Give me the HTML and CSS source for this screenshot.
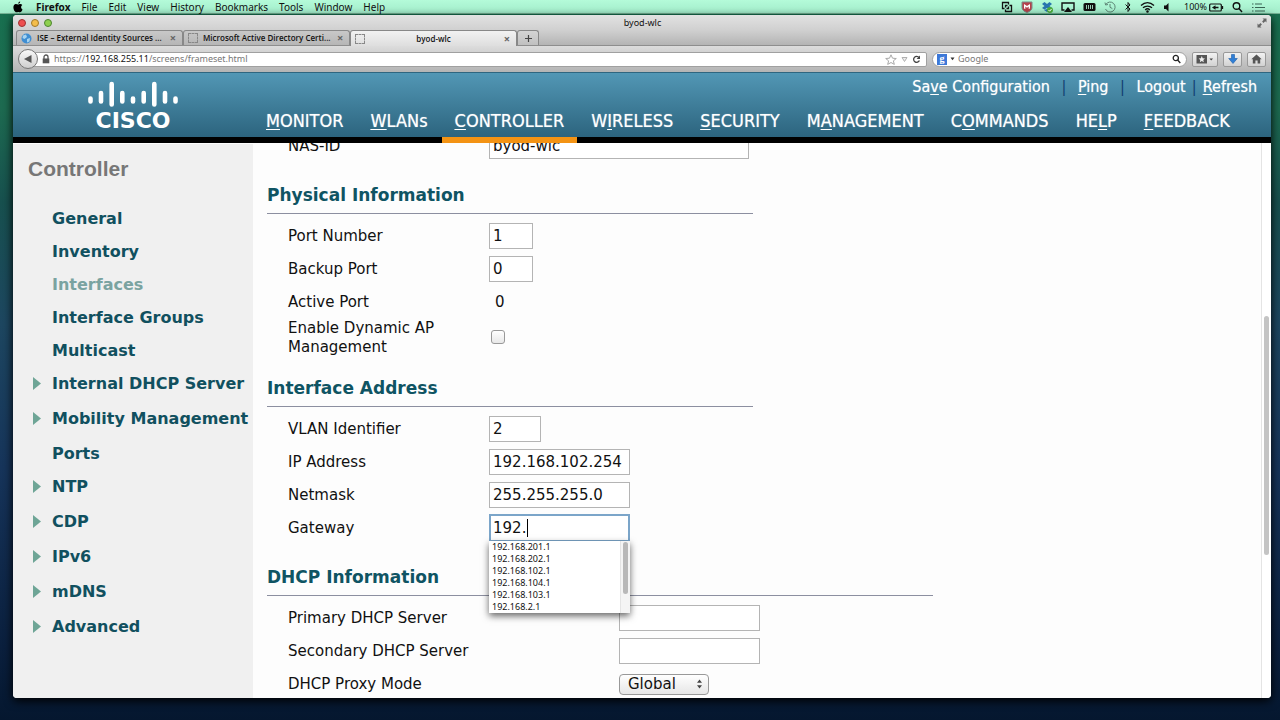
FILE: index.html
```html
<!DOCTYPE html>
<html lang="en">
<head>
<meta charset="utf-8">
<title>byod-wlc</title>
<link rel="stylesheet" href="styles.css">
</head>

<body>
<div class="menubar">
  <svg class="apple" width="12" height="12" viewBox="0 0 12 12"><path d="M8.2 0.4C7 0.6 6.2 1.5 6.2 2.7 7.400 2.600 8.200 1.600 8.200 0.400zM8.300 2.900C7.300 2.900 6.800 3.400 6.100 3.400 5.400 3.400 4.700 2.900 3.900 2.900 2.400 3 1.400 4.300 1.400 6.300 1.400 8.800 3 11.300 4.300 11.300 5 11.300 5.400 10.900 6.200 10.900 7 10.900 7.300 11.300 8 11.300 9.200 11.300 10.300 9.300 10.500 8.500 8.700 7.700 8.600 5 10.300 4.100 9.800 3.300 9.100 2.900 8.300 2.900z"/></svg>
  <ul class="menus">
    <li class="app">Firefox</li>
    <li>File</li>
    <li>Edit</li>
    <li>View</li>
    <li>History</li>
    <li>Bookmarks</li>
    <li>Tools</li>
    <li>Window</li>
    <li>Help</li>
  </ul>
  <div class="status">
    <svg width="12" height="12" viewBox="0 0 12 12" fill="none" stroke="#111" stroke-width="1.3"><path d="M3.500 7.500H1.500V1.500H7.500V3.500M8.500 4.500H10.500V10.500H4.500V8.500M4.500 6.500V4.500H6.500M7.500 5.500V7.500H5.500"/></svg>
    <svg width="12" height="12" viewBox="0 0 12 12"><path d="M1 1H11V7C11 9 8 11 6 11.500 4 11 1 9 1 7z" fill="#b5404a" stroke="#7c8c88"/><path d="M3 3L6 5 9 3V7.500L7.700 8V5.500L6 6.800 4.300 5.500V8L3 7.500z" fill="#fff"/></svg>
    <svg width="12" height="12" viewBox="0 0 12 12"><path d="M3.500 1L6 3 8.500 1 11 3 8.500 5 11 7 8.500 8.500 6 7 3.500 8.500 1 7 3.500 5 1 3zM3 9L6 8 9 9 6 11z" fill="#2874ae"/><circle cx="9" cy="9" r="3" fill="#4cae3c"/><path d="M7.500 9L8.700 10.200 10.500 8" fill="none" stroke="#fff"/></svg>
    <svg width="14" height="12" viewBox="0 0 14 12"><path d="M3.500 9H1V2H13V9H10.500" fill="none" stroke="#111" stroke-width="1.400"/><path d="M7 6L11 11H3z" fill="#111"/></svg>
    <svg width="13" height="12" viewBox="0 0 13 12"><rect x="0.500" y="2" width="12" height="8" rx="1.500" fill="#111"/><path d="M3.500 4V8M5.500 4V8M7.500 4V8M9.500 4V8" stroke="#a9e3c8" stroke-width="0.900"/></svg>
    <svg width="12" height="12" viewBox="0 0 12 12" fill="none" stroke="#5c8474"><path d="M1.800 3.500A5 5 0 1 1 1.500 8M1 1.500L1.600 4 4 3.500M6 3V6.300L8.300 7.500"/></svg>
    <svg width="8" height="12" viewBox="0 0 8 12" fill="none" stroke="#111"><path d="M1.500 3.500L6 8 4 10.500V1.500L6 4 1.500 8.500"/></svg>
    <svg width="15" height="12" viewBox="0 0 15 12" fill="none" stroke="#111" stroke-width="1.400"><path d="M1 4.500C5 0.900 10 0.900 14 4.500M3 6.800C5.500 4.500 9.500 4.500 12 6.800M5.200 8.900C6.500 7.700 8.500 7.700 9.800 8.900"/><circle cx="7.500" cy="10.500" r="0.600"/></svg>
    <svg width="7" height="12" viewBox="0 0 7 12"><path d="M1 4.500H3L5.500 2V10.500L3 8H1z" fill="#111"/></svg>
    <span class="battery">100%
      <svg width="15" height="12" viewBox="0 0 15 12"><rect x="0.700" y="3" width="11.600" height="7" rx="1" fill="none" stroke="#111" stroke-width="1.200"/><path d="M13.500 5V8M6 6.500H9.500" stroke="#111" stroke-width="1.300"/><path d="M3 6.500L6.500 4.300V8.700z" fill="#111"/></svg>
    </span>
    <svg width="11" height="12" viewBox="0 0 11 12" fill="none" stroke="#111" stroke-width="1.400"><circle cx="4.500" cy="5" r="3.300"/><path d="M7 7.500L10 11"/></svg>
    <svg width="15" height="12" viewBox="0 0 15 12" fill="none" stroke="#3a6454" stroke-width="1.200"><path d="M1 3H2.500M4 3H11M1 6.500H2.500M4 6.500H14M1 10H2.500M4 10H14"/></svg>
  </div>
</div>

<div class="window">
  <div class="titlebar">
    <div class="lights"><i class="red"></i><i class="yellow"></i><i class="green"></i></div>
    <span class="title">byod-wlc</span>
    <svg class="full" width="10" height="10" viewBox="0 0 10 10" fill="#666"><path d="M5.500 0.500H9.500V4.500L8.200 3.200 6.500 4.900 5.100 3.500 6.800 1.800zM4.500 9.500H0.500V5.500L1.800 6.800 3.500 5.100 4.900 6.500 3.200 8.200z"/></svg>
  </div>
  <div class="tabs">
    <div class="tab">
      <svg width="11" height="11" viewBox="0 0 11 11"><circle cx="5.500" cy="5.500" r="5" fill="#3f8ed2"/><path d="M2 2.500L5 1.500 6 4 3.500 6 1.500 5zM6 6L9 5 8.500 8.500 6 9.500z" fill="#a8d4f0"/></svg>
      <span>ISE – External Identity Sources ...</span>
      <button type="button" aria-label="Close tab">×</button>
    </div>
    <div class="tab">
      <i class="blank"></i>
      <span>Microsoft Active Directory Certi...</span>
      <button type="button" aria-label="Close tab">×</button>
    </div>
    <div class="tab on">
      <i class="blank"></i>
      <span>byod-wlc</span>
      <button type="button" aria-label="Close tab">×</button>
    </div>
    <button class="newtab" type="button" aria-label="New tab"><svg width="9" height="9" viewBox="0 0 9 9"><path d="M4.500 1V8M1 4.500H8" stroke="#444" stroke-width="1.200"/></svg></button>
  </div>
  <div class="toolbar">
    <button class="back" type="button" aria-label="Back"><svg width="10" height="10" viewBox="0 0 10 10"><path d="M8.500 1V9L1 5z" fill="#555"/></svg></button>
    <div class="urlbar">
      <svg width="8" height="10" viewBox="0 0 8 10"><path d="M2 5V3A2 2 0 0 1 6 3V5" fill="none" stroke="#555" stroke-width="1.300"/><rect x="0.700" y="4.500" width="6.600" height="4.800" fill="#555"/></svg>
      <span class="url">https://<b>192.168.255.11</b>/screens/frameset.html</span>
      <svg width="12" height="11" viewBox="0 0 12 11"><path d="M6 0.800L7.500 4.200 11.300 4.500 8.400 6.800 9.300 10.400 6 8.500 2.700 10.400 3.600 6.800 0.700 4.500 4.500 4.200z" fill="#fff" stroke="#a8a8a8"/></svg>
      <svg width="7" height="7" viewBox="0 0 7 7"><path d="M1 1.500H6L3.500 5.500z" fill="#eee" stroke="#b0b0b0"/></svg>
      <svg width="9" height="9" viewBox="0 0 9 9"><path d="M7 2.500A3 3 0 1 0 7.400 5.500" fill="none" stroke="#444" stroke-width="1.300"/><path d="M8 0.500V4H4.600z" fill="#444"/></svg>
    </div>
    <div class="search">
      <span class="g">g</span>
      <svg width="5" height="4" viewBox="0 0 5 4"><path d="M0.500 0.500H4.500L2.500 3.200z" fill="#333"/></svg>
      <input type="text" placeholder="Google" aria-label="Search">
      <svg width="9" height="10" viewBox="0 0 9 10" fill="none" stroke="#222" stroke-width="1.300"><circle cx="3.800" cy="4" r="2.600"/><path d="M5.600 6L8.300 9"/></svg>
    </div>
    <button class="tool wide" type="button" aria-label="Bookmarks"><svg width="18" height="10" viewBox="0 0 18 10"><rect x="0.500" y="1" width="10.500" height="8.500" fill="#555"/><path d="M5.800 2L6.700 4.200 9 4.400 7.300 5.900 7.800 8.200 5.800 7 3.800 8.200 4.300 5.900 2.600 4.400 4.900 4.200z" fill="#eee"/><path d="M13.500 4.500H17L15.200 6.500z" fill="#444"/></svg></button>
    <button class="tool" type="button" aria-label="Downloads"><svg width="10" height="10" viewBox="0 0 10 10"><path d="M3.500 0.500H6.500V4.500H9.300L5 9.500 0.700 4.500H3.500z" fill="#2f7fd6" stroke="#1b5ca8" stroke-width="0.600"/></svg></button>
    <button class="tool" type="button" aria-label="Home"><svg width="11" height="10" viewBox="0 0 11 10"><path d="M5.500 0.500L10.700 5.300H9.200V9.500H6.600V6.500H4.400V9.500H1.800V5.300H0.300z" fill="#555"/></svg></button>
  </div>

  <div class="header">
    <div class="logo">
      <svg width="92" height="28" viewBox="0 0 92 28" stroke="#fff" stroke-width="4.600" stroke-linecap="round"><path d="M3.500 18.500V21.500M14 13V21.500M24.700 4V24.500M35.300 13V21.500M46 18.500V21.500M56.700 13V21.500M67.300 4V24.500M78 13V21.500M88.500 18.500V21.500"/></svg>
      <span>CISCO</span>
    </div>
    <div class="links">
      <a href="#">Sa<u>v</u>e Configuration</a><i>|</i><a href="#"><u>P</u>ing</a><i>|</i><a href="#">Logout</a><i class="tight">|</i><a href="#"><u>R</u>efresh</a>
    </div>
    <div class="nav">
      <a href="#"><u>M</u>ONITOR</a>
      <a href="#"><u>W</u>LANs</a>
      <a href="#" class="on"><u>C</u>ONTROLLER</a>
      <a href="#">W<u>I</u>RELESS</a>
      <a href="#"><u>S</u>ECURITY</a>
      <a href="#">M<u>A</u>NAGEMENT</a>
      <a href="#">C<u>O</u>MMANDS</a>
      <a href="#">HE<u>L</u>P</a>
      <a href="#"><u>F</u>EEDBACK</a>
    </div>
  </div>

  <div class="main">
    <div class="side">
      <h2>Controller</h2>
      <ul>
        <li><a href="#">General</a></li>
        <li><a href="#">Inventory</a></li>
        <li><a href="#" class="on">Interfaces</a></li>
        <li><a href="#">Interface Groups</a></li>
        <li><a href="#">Multicast</a></li>
        <li class="more"><a href="#">Internal DHCP Server</a></li>
        <li class="more"><a href="#">Mobility Management</a></li>
        <li><a href="#">Ports</a></li>
        <li class="more"><a href="#">NTP</a></li>
        <li class="more"><a href="#">CDP</a></li>
        <li class="more"><a href="#">IPv6</a></li>
        <li class="more"><a href="#">mDNS</a></li>
        <li class="more"><a href="#">Advanced</a></li>
      </ul>
    </div>

    <form class="content">
      <div class="section">
        <div class="row"><label for="nas">NAS-ID</label><input class="w260" type="text" id="nas" value="byod-wlc"></div>
      </div>

      <div class="section">
        <h3>Physical Information</h3>
        <div class="row"><label for="port">Port Number</label><input class="w44" type="text" id="port" value="1"></div>
        <div class="row"><label for="backup">Backup Port</label><input class="w44" type="text" id="backup" value="0"></div>
        <div class="row"><span class="label">Active Port</span><span class="value">0</span></div>
        <div class="row two"><label for="dynap">Enable Dynamic AP Management</label><input type="checkbox" id="dynap"></div>
      </div>

      <div class="section">
        <h3>Interface Address</h3>
        <div class="row"><label for="vlan">VLAN Identifier</label><input class="w52" type="text" id="vlan" value="2"></div>
        <div class="row"><label for="ip">IP Address</label><input class="w141" type="text" id="ip" value="192.168.102.254"></div>
        <div class="row"><label for="mask">Netmask</label><input class="w141" type="text" id="mask" value="255.255.255.0"></div>
        <div class="row"><label for="gw">Gateway</label>
          <div class="combo">
            <input class="w141 focus" type="text" id="gw" value="192.">
            <i class="caret"></i>
            <div class="popup">
              <ul>
                <li>192.168.201.1</li>
                <li>192.168.202.1</li>
                <li>192.168.102.1</li>
                <li>192.168.104.1</li>
                <li>192.168.103.1</li>
                <li>192.168.2.1</li>
              </ul>
              <div class="track"><i></i></div>
            </div>
          </div>
        </div>
      </div>

      <div class="section dhcp">
        <h3>DHCP Information</h3>
        <div class="row"><label for="dhcp1">Primary DHCP Server</label><input class="w141" type="text" id="dhcp1"></div>
        <div class="row"><label for="dhcp2">Secondary DHCP Server</label><input class="w141" type="text" id="dhcp2"></div>
        <div class="row"><label for="proxy">DHCP Proxy Mode</label>
          <div class="pick">
            <select id="proxy"><option>Global</option><option>Enabled</option><option>Disabled</option></select>
            <svg width="7" height="10" viewBox="0 0 7 10"><path d="M3.500 0.500L6 3.800H1zM3.500 9.500L6 6.200H1z" fill="#444"/></svg>
          </div>
        </div>
      </div>
    </form>

    <div class="scroll"><i></i></div>
  </div>
</div>
</body>
</html>
```
FILE: styles.css
```css
*{box-sizing:border-box;}
body,ul,h2,h3{margin:0;padding:0;}
ul{list-style:none;}
a{text-decoration:none;}
button,input,select{margin:0;padding:0;font:inherit;color:inherit;}
svg{flex:none;}
body{display:flex;flex-direction:column;height:100vh;overflow:hidden;font:15px/19px 'DejaVu Sans',Verdana,sans-serif;color:#111;
  background:linear-gradient(#17704f 0,#1d6a50 15%,#17504e 28%,#1d4660 45%,#16345a 65%,#0a1f3d 90%,#05172f 100%);}

/* mac menu bar */
.menubar{flex:none;display:flex;align-items:center;height:14px;padding:0 14px 0 12px;font:10px/14px 'Noto Sans',sans-serif;background:linear-gradient(#b4fbd9,#a2ecca);border-bottom:1px solid #74b294;}
.menus{display:flex;gap:11px;margin-left:12px;}
.app{font-weight:bold;}
.status{display:flex;align-items:center;gap:8px;margin-left:auto;}
.battery{display:flex;align-items:center;gap:2px;margin-left:6px;font-size:9px;}

/* browser */
.window{flex:1;min-height:0;display:flex;flex-direction:column;margin:1px 9px 22px 13px;border-radius:4px;overflow:hidden;background:#fdfdfd;box-shadow:0 3px 10px #000;}
.titlebar{flex:none;display:grid;grid-template-columns:1fr auto 1fr;align-items:center;height:15px;padding:0 4px 0 5px;background:linear-gradient(#e2e2e2,#d0d0d0);font:9px/14px 'Noto Sans',sans-serif;}
.lights{display:flex;gap:5px;}
.lights i{width:8px;height:8px;border-radius:50%;border:1px solid #777;}
.lights .red{background:#ee4f50;border-color:#a03030;}
.lights .yellow{background:#f4bd4a;border-color:#a07828;}
.lights .green{background:#8fd04e;border-color:#4d8430;}
.full{justify-self:end;}
.tabs{flex:none;display:flex;height:16px;padding-left:3px;background:linear-gradient(#d0d0d0,#b4b4b4);border-bottom:1px solid #8e8e8e;font:600 8px/14px 'Open Sans',sans-serif;}
.tab{display:flex;align-items:center;gap:5px;width:167px;height:15px;padding:0 4px;background:linear-gradient(#c8c8c8,#b6b6b6);border:1px solid #888;border-bottom:0;border-radius:3px 3px 0 0;}
.tab span{flex:1;white-space:nowrap;}
.tab button{width:10px;border:0;background:none;color:#666;font:bold 11px/12px 'Noto Sans',sans-serif;}
.tab.on{height:16px;background:linear-gradient(#f2f2f2,#dedede);}
.tab.on span{text-align:center;}
.blank{flex:none;width:10px;height:10px;border:1px dashed #888;}
.newtab{display:flex;align-items:center;justify-content:center;width:22px;height:15px;border:1px solid #888;border-bottom:0;border-radius:3px 3px 0 0;background:linear-gradient(#d4d4d4,#c0c0c0);}
.toolbar{flex:none;display:flex;align-items:center;gap:5px;height:26px;padding:0 5px;background:linear-gradient(#dcdcdc,#b4b4b4);font:9px/14px 'Noto Sans',sans-serif;}
.back{z-index:1;flex:none;display:flex;align-items:center;justify-content:center;width:20px;height:20px;margin-right:-10px;border:1px solid #777;border-radius:50%;background:linear-gradient(#f8f8f8,#cfcfcf);}
.urlbar{flex:1;display:flex;align-items:center;gap:4px;height:15px;padding:0 5px 0 8px;background:#fff;border:1px solid #a0a0a0;border-radius:2px;color:#777;}
.url{flex:1;}
.url b{font-weight:normal;color:#111;}
.search{display:flex;align-items:center;gap:3px;width:255px;height:15px;padding:0 5px 0 4px;background:#fff;border:1px solid #a0a0a0;border-radius:8px;}
.search input{flex:1;min-width:0;border:0;outline:0;background:none;}
.search input::placeholder{color:#777;}
.g{width:10px;height:11px;background:#3d78d8;color:#fff;font:bold 10px/9px 'Liberation Serif',serif;text-align:center;}
.tool{flex:none;display:flex;align-items:center;justify-content:center;width:19px;height:15px;border:1px solid #999;border-radius:2px;background:linear-gradient(#f2f2f2,#d2d2d2);}
.wide{width:26px;}

/* cisco banner */
.header{flex:none;display:grid;grid-template-columns:240px 1fr;grid-template-rows:31px 39px;border-top:1px solid #2f6680;background:linear-gradient(#5297b5,#2c647e 64px,#000 64px);color:#fff;font-family:'DejaVu Sans Condensed',Tahoma,'Noto Sans',sans-serif;}
.header a{color:#fff;text-shadow:0 0 1px rgba(255,255,255,.6);}
.header u{text-underline-offset:2px;text-decoration-thickness:1px;}
.logo{grid-row:1/3;display:flex;flex-direction:column;align-items:center;padding-top:7px;}
.logo span{font:bold 22px/26px 'DejaVu Sans',sans-serif;}
.links{display:flex;align-items:center;justify-content:flex-end;padding:0 14px 4px 0;font-size:16px;}
.links i{width:28px;text-align:center;font-style:normal;color:#123f72;}
.links .tight{width:17px;}
.nav{display:flex;gap:1px;font-size:18px;line-height:33px;}
.nav a{height:39px;padding:0 13px;border-bottom:6px solid transparent;}
.nav .on{border-color:#f39314;}

/* page */
.main{flex:1;min-height:0;display:flex;overflow:hidden;}
.side{flex:none;width:240px;margin-top:1px;padding:12px 0 0 15px;background:#f0f0f0;font-size:16px;}
.side h2{font:bold 21px/26px 'Liberation Sans',Arial,sans-serif;color:#777;}
.side ul{padding-top:20px;}
.side li{height:33px;padding-left:24px;line-height:33px;}
.side a{font-weight:bold;color:#11505f;white-space:nowrap;}
.side .on{color:#7aa3a0;}
.side .more{display:flex;height:35px;padding-left:5px;}
.more:before{content:'';margin:10px 11px 0 0;width:8px;height:13px;background:#6ea596;clip-path:polygon(0 0,100% 50%,0 100%);}
.content{flex:1;margin-top:-14px;padding-left:14px;}
.section{width:486px;margin-bottom:1px;}
.dhcp{width:666px;}
.section h3{height:51px;margin-bottom:5px;padding-top:19px;border-bottom:1px solid #8c8fa0;font-size:17px;line-height:26px;color:#0f5463;}
.row{display:flex;align-items:center;height:33px;padding-left:21px;}
.row label,.label{width:201px;padding:2px 40px 0 0;}
.dhcp label{width:331px;}
.value{padding:2px 0 0 6px;}
.two{height:37px;}
.row input[type=text]{height:26px;padding:0 3px;border:1px solid #b4b4b4;background:#fff;outline:0;}
.row input.focus{height:28px;border:2px solid #7ba5c9;padding:0 2px;}
.row input[type=checkbox]{appearance:none;width:14px;height:14px;margin-left:2px;border:1px solid #999;border-radius:3px;background:linear-gradient(#fff,#e8e8e8);}
.w44{width:44px;}
.w52{width:52px;}
.w141{width:141px;}
.w260{width:260px;}
.combo{position:relative;display:flex;}
.caret{position:absolute;left:38px;top:5px;width:1px;height:18px;background:#000;}
.popup{position:absolute;left:0;top:27px;z-index:2;display:flex;width:141px;height:72px;background:#fff;box-shadow:0 3px 7px rgba(0,0,0,.6);font:9px/12px 'Noto Sans',sans-serif;}
.popup ul{flex:1;padding-left:3px;}
.track{width:10px;padding:1px 2px;background:#f4f4f4;border-left:1px solid #e4e4e4;}
.track i{display:block;width:5px;height:52px;border-radius:3px;background:#b8b8b8;}
.pick{position:relative;padding-top:2px;}
.pick select{display:block;appearance:none;width:90px;height:21px;padding-left:8px;border:1px solid #999;border-radius:4px;background:linear-gradient(#fff,#e6e6e6);line-height:19px;}
.pick svg{position:absolute;right:6px;top:7px;pointer-events:none;}
.scroll{flex:none;width:10px;padding:173px 0 0 2px;border-left:1px solid #e4e4e4;background:#fff;}
.scroll i{display:block;width:5px;height:239px;border-radius:3px;background:#c4c4c4;}
```
